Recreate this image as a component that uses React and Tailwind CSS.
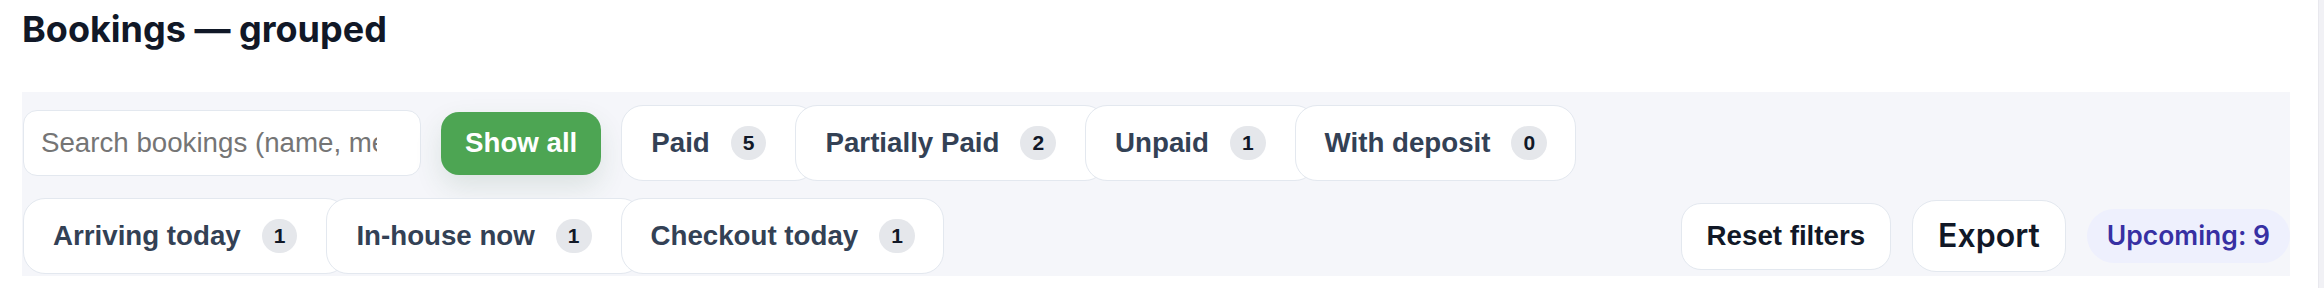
import React from "react";

const ARIAL = { fontFamily: '"Liberation Sans", Arial, sans-serif' };
const INTER = { fontFamily: 'Inter, "Noto Sans", sans-serif' };

const paymentChips = [
  { label: "Paid", count: 5 },
  { label: "Partially Paid", count: 2 },
  { label: "Unpaid", count: 1 },
  { label: "With deposit", count: 0 },
];

const timeChips = [
  { label: "Arriving today", count: 1 },
  { label: "In-house now", count: 1 },
  { label: "Checkout today", count: 1 },
];

function ChipGroup({ items }) {
  return (
    <div className="flex items-center">
      {items.map((chip, i) => (
        <button
          key={chip.label}
          type="button"
          style={ARIAL}
          className={`relative flex h-[76px] items-center gap-[21px] rounded-[22px] border border-[#e3e8ef] bg-white pl-[29px] text-[27.7px] font-bold text-[#334155] ${
            i > 0 ? "-ml-[22px]" : ""
          } ${i === items.length - 1 ? "pr-[28px]" : "pr-[50px]"}`}
        >
          <span>{chip.label}</span>
          <span className="flex h-[34px] items-center rounded-full bg-[#e5e7eb] px-3 text-[21px] font-bold text-[#111827]">
            {chip.count}
          </span>
        </button>
      ))}
    </div>
  );
}

export default function App() {
  return (
    <div className="flex h-[288px] w-full bg-white">
      <div className="flex-1 pl-[22px] pr-[28px]">
        <h1
          style={INTER}
          className="pt-[8px] text-[36px] font-bold leading-[43px] text-[#111827] mb-[41px]"
        >
          Bookings — grouped
        </h1>

        <div className="flex flex-col gap-[17px] bg-[#f5f6fa] pl-px pt-[13px] pb-[2px]">
          {/* search + payment filters */}
          <div className="flex items-center gap-5">
            <input
              type="text"
              placeholder="Search bookings (name, message)"
              style={ARIAL}
              className="h-[66px] w-[398px] rounded-[14px] border border-[#e3e8ef] bg-white pl-[17px] pr-[43px] text-[27.7px] text-[#111827] placeholder:text-[#757575] outline-none"
            />
            <button
              type="button"
              style={ARIAL}
              className="h-[63px] rounded-[18px] bg-[#4da553] px-6 text-[27.7px] font-bold text-white shadow-[0_12px_28px_rgba(40,90,50,0.12)]"
            >
              Show all
            </button>
            <ChipGroup items={paymentChips} />
          </div>

          {/* time filters + actions */}
          <div className="flex items-center">
            <ChipGroup items={timeChips} />
            <div className="flex-1" />
            <div className="flex items-center gap-[21px]">
              <button
                type="button"
                style={ARIAL}
                className="h-[67px] rounded-[20px] border border-[#e3e8ef] bg-white px-[25px] text-[27.7px] font-bold text-[#111827]"
              >
                Reset filters
              </button>
              <button
                type="button"
                style={INTER}
                className="h-[72px] rounded-[24px] border border-[#e3e8ef] bg-white px-[25px] text-[32px] font-semibold text-[#111827]"
              >
                Export
              </button>
              <span
                style={INTER}
                className="flex h-[54px] items-center rounded-full bg-[#eef0fd] px-[20px] text-[26.5px] font-semibold text-[#3730a3]"
              >
                Upcoming: 9
              </span>
            </div>
          </div>
        </div>
      </div>
      <div className="w-[6px] border-l border-[#e8e8ee] bg-[#f1f1f5]" />
    </div>
  );
}
